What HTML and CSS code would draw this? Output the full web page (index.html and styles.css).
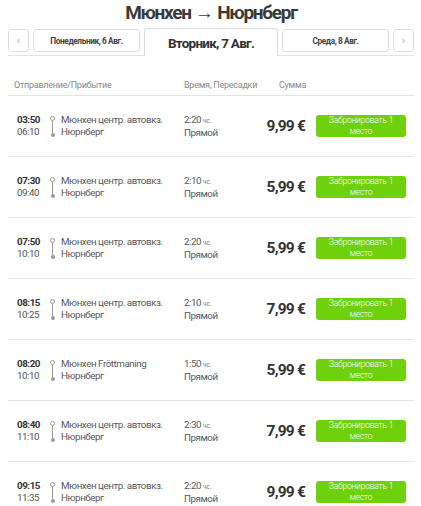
FILE: index.html
```html
<!DOCTYPE html>
<html lang="ru">
<head>
<meta charset="utf-8">
<title>Мюнхен → Нюрнберг</title>
<link rel="stylesheet" href="styles.css">
</head>
<body>
<div class="page">
  <h1 class="title">Мюнхен → Нюрнберг</h1>
  <div class="tabs">
    <div class="tab arrow">‹</div>
    <div class="tab day">Понедельник, 6 Авг.</div>
    <div class="tab active">Вторник, 7 Авг.</div>
    <div class="tab day">Среда, 8 Авг.</div>
    <div class="tab arrow">›</div>
  </div>
  <div class="head">
    <span class="h-route">Отправление/Прибытие</span>
    <span class="h-dur">Время, Пересадки</span>
    <span class="h-sum">Сумма</span>
  </div>
  <div class="list">
    <div class="row">
      <div class="times"><b>03:50</b><span>06:10</span></div>
      <div class="line"><i class="ring"></i><i class="bar"></i><i class="dot"></i></div>
      <div class="stations"><span>Мюнхен центр. автовкз.</span><span>Нюрнберг</span></div>
      <div class="dur"><span>2:20 <small>чс.</small></span><span>Прямой</span></div>
      <div class="price">9,99 €</div>
      <button class="book">Забронировать 1 место</button>
    </div>
    <div class="row">
      <div class="times"><b>07:30</b><span>09:40</span></div>
      <div class="line"><i class="ring"></i><i class="bar"></i><i class="dot"></i></div>
      <div class="stations"><span>Мюнхен центр. автовкз.</span><span>Нюрнберг</span></div>
      <div class="dur"><span>2:10 <small>чс.</small></span><span>Прямой</span></div>
      <div class="price">5,99 €</div>
      <button class="book">Забронировать 1 место</button>
    </div>
    <div class="row">
      <div class="times"><b>07:50</b><span>10:10</span></div>
      <div class="line"><i class="ring"></i><i class="bar"></i><i class="dot"></i></div>
      <div class="stations"><span>Мюнхен центр. автовкз.</span><span>Нюрнберг</span></div>
      <div class="dur"><span>2:20 <small>чс.</small></span><span>Прямой</span></div>
      <div class="price">5,99 €</div>
      <button class="book">Забронировать 1 место</button>
    </div>
    <div class="row">
      <div class="times"><b>08:15</b><span>10:25</span></div>
      <div class="line"><i class="ring"></i><i class="bar"></i><i class="dot"></i></div>
      <div class="stations"><span>Мюнхен центр. автовкз.</span><span>Нюрнберг</span></div>
      <div class="dur"><span>2:10 <small>чс.</small></span><span>Прямой</span></div>
      <div class="price">7,99 €</div>
      <button class="book">Забронировать 1 место</button>
    </div>
    <div class="row">
      <div class="times"><b>08:20</b><span>10:10</span></div>
      <div class="line"><i class="ring"></i><i class="bar"></i><i class="dot"></i></div>
      <div class="stations"><span>Мюнхен Fröttmaning</span><span>Нюрнберг</span></div>
      <div class="dur"><span>1:50 <small>чс.</small></span><span>Прямой</span></div>
      <div class="price">5,99 €</div>
      <button class="book">Забронировать 1 место</button>
    </div>
    <div class="row">
      <div class="times"><b>08:40</b><span>11:10</span></div>
      <div class="line"><i class="ring"></i><i class="bar"></i><i class="dot"></i></div>
      <div class="stations"><span>Мюнхен центр. автовкз.</span><span>Нюрнберг</span></div>
      <div class="dur"><span>2:30 <small>чс.</small></span><span>Прямой</span></div>
      <div class="price">7,99 €</div>
      <button class="book">Забронировать 1 место</button>
    </div>
    <div class="row">
      <div class="times"><b>09:15</b><span>11:35</span></div>
      <div class="line"><i class="ring"></i><i class="bar"></i><i class="dot"></i></div>
      <div class="stations"><span>Мюнхен центр. автовкз.</span><span>Нюрнберг</span></div>
      <div class="dur"><span>2:20 <small>чс.</small></span><span>Прямой</span></div>
      <div class="price">9,99 €</div>
      <button class="book">Забронировать 1 место</button>
    </div>
  </div>
</div>
</body>
</html>
```
FILE: styles.css
```css
* { box-sizing: border-box; }
html, body { margin: 0; padding: 0; background: #fff; }
body { font-family: Roboto, "Liberation Sans", sans-serif; color: #444; }
.page { padding: 0 7px 0 8px; }
.title {
  margin: 0;
  padding-top: 1px;
  height: 28px;
  font-size: 19px;
  line-height: 23px;
  font-weight: 700;
  text-align: center;
  color: #3a3a3a;
  letter-spacing: -1.3px;
  word-spacing: 1px;
}
.tabs {
  display: flex;
  align-items: flex-start;
  gap: 4px;
  border-bottom: 1px solid #e4e4e4;
  height: 28px;
}
.tab {
  height: 23px;
  margin-top: 1px;
  border: 1px solid #dedede;
  border-radius: 3px;
  display: flex;
  align-items: center;
  justify-content: center;
  font-size: 8.3px;
  font-weight: 700;
  color: #444;
  background: #fff;
  letter-spacing: -0.4px;
}
.arrow { width: 21px; color: #aaa; font-weight: 400; font-size: 11px; letter-spacing: 0; }
.day { width: 107px; }
.tab.active {
  width: 134px;
  height: 28px;
  margin-top: 0;
  border-bottom: none;
  border-radius: 3px 3px 0 0;
  font-size: 13.5px;
  letter-spacing: -0.75px;
  color: #333;
  padding-top: 1px;
}
.head {
  display: flex;
  padding: 24px 0 5px 6px;
  font-size: 9px;
  color: #8a8a8a;
  border-bottom: 1px solid #e2e2e2;
  height: 40px;
  align-items: flex-end;
  letter-spacing: -0.25px;
}
.h-route { width: 170px; }
.h-dur { width: 95px; }
.row {
  display: grid;
  grid-template-columns: 35px 11px 124px 70px 51px 101px;
  align-items: center;
  height: 61px;
  padding-left: 6px;
  border-bottom: 1px solid #e6e6e6;
  font-size: 9.8px;
  letter-spacing: -0.45px;
}
.times, .stations, .dur {
  display: flex;
  flex-direction: column;
  line-height: 12px;
}
.times { padding-left: 3px; }
.times b { color: #333; font-weight: 700; }
.times span { color: #555; }
.stations { color: #5a5a5a; padding-left: 1px; }
.dur { color: #5a5a5a; }
.dur small { font-size: 6.5px; color: #777; letter-spacing: 0; }
.line {
  display: flex;
  flex-direction: column;
  align-items: center;
  height: 21px;
  margin-left: -4px;
}
.ring { width: 5px; height: 5px; border: 1px solid #999; border-radius: 50%; }
.bar { width: 1px; flex: 1; background: #999; }
.dot { width: 4px; height: 4px; border-radius: 50%; background: #999; }
.price {
  text-align: right;
  font-size: 15.5px;
  font-weight: 700;
  color: #333;
  letter-spacing: -0.8px;
}
.book {
  justify-self: end;
  width: 90px;
  height: 22px;
  border: none;
  border-radius: 3px;
  background: #6fd10c;
  color: #fff;
  font-family: Roboto, "Liberation Sans", sans-serif;
  font-size: 8.5px;
  font-weight: 300;
  line-height: 11px;
  padding: 0 6px;
  text-align: center;
  letter-spacing: -0.2px;
}
```
